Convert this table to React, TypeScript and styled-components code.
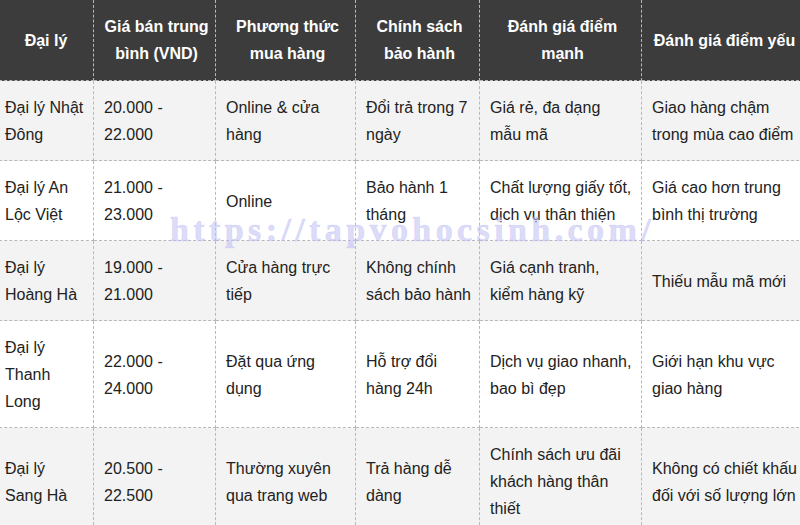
import React from 'react';
import styled, { createGlobalStyle } from 'styled-components';

const GlobalStyle = createGlobalStyle`
  html, body {
    margin: 0;
    padding: 0;
    background: #ffffff;
    overflow: hidden;
  }
`;

const Page = styled.div`
  position: relative;
  width: 800px;
  height: 525px;
  overflow: hidden;
  font-family: 'Liberation Sans', Arial, sans-serif;
`;

const Table = styled.table`
  border-collapse: collapse;
  table-layout: fixed;
  width: 809px;
  margin-left: -6px;
  font-size: 16px;
  line-height: 27px;
  color: #222;
`;

const HeadCell = styled.th`
  background: #3c3c3c;
  color: #ffffff;
  font-weight: bold;
  text-align: center;
  vertical-align: middle;
  white-space: pre-line;
  padding: 13px 2px 13px 6px;
  border: 1px dashed #b8b8b8;
  border-top: none;
`;

const Row = styled.tr<{ $shaded: boolean }>`
  background: ${p => (p.$shaded ? '#f3f3f3' : '#ffffff')};
`;

const Cell = styled.td`
  text-align: left;
  vertical-align: middle;
  white-space: pre-line;
  padding: 13px 0 12px 10px;
  border: 1px dashed #b8b8b8;
`;

const Watermark = styled.div`
  position: absolute;
  left: 170px;
  top: 210px;
  font-family: 'Liberation Serif', 'Times New Roman', serif;
  font-weight: bold;
  font-size: 34px;
  letter-spacing: 4.4px;
  line-height: 40px;
  color: rgba(190, 190, 245, 0.55);
  -webkit-text-stroke: 0.6px rgba(190, 190, 245, 0.55);
  white-space: nowrap;
  pointer-events: none;
`;

const widths = [99, 122, 140, 124, 162, 162];

const headers = [
  'Đại lý',
  'Giá bán trung\nbình (VND)',
  'Phương thức\nmua hàng',
  'Chính sách\nbảo hành',
  'Đánh giá điểm\nmạnh',
  'Đánh giá điểm yếu',
];

const rows: string[][] = [
  ['Đại lý Nhật\nĐông', '20.000 -\n22.000', 'Online & cửa\nhàng', 'Đổi trả trong 7\nngày', 'Giá rẻ, đa dạng\nmẫu mã', 'Giao hàng chậm\ntrong mùa cao điểm'],
  ['Đại lý An\nLộc Việt', '21.000 -\n23.000', 'Online', 'Bảo hành 1\ntháng', 'Chất lượng giấy tốt,\ndịch vụ thân thiện', 'Giá cao hơn trung\nbình thị trường'],
  ['Đại lý\nHoàng Hà', '19.000 -\n21.000', 'Cửa hàng trực\ntiếp', 'Không chính\nsách bảo hành', 'Giá cạnh tranh,\nkiểm hàng kỹ', 'Thiếu mẫu mã mới'],
  ['Đại lý\nThanh\nLong', '22.000 -\n24.000', 'Đặt qua ứng\ndụng', 'Hỗ trợ đổi\nhàng 24h', 'Dịch vụ giao nhanh,\nbao bì đẹp', 'Giới hạn khu vực\ngiao hàng'],
  ['Đại lý\nSang Hà', '20.500 -\n22.500', 'Thường xuyên\nqua trang web', 'Trả hàng dễ\ndàng', 'Chính sách ưu đãi\nkhách hàng thân\nthiết', 'Không có chiết khấu\nđối với số lượng lớn'],
];

export default function App() {
  return (
    <Page>
      <GlobalStyle />
      <Table>
        <colgroup>
          {widths.map((w, i) => (
            <col key={i} style={{ width: w }} />
          ))}
        </colgroup>
        <thead>
          <tr>
            {headers.map(h => (
              <HeadCell key={h}>{h}</HeadCell>
            ))}
          </tr>
        </thead>
        <tbody>
          {rows.map((r, i) => (
            <Row key={r[0]} $shaded={i % 2 === 0}>
              {r.map((c, j) => (
                <Cell key={j}>{c}</Cell>
              ))}
            </Row>
          ))}
        </tbody>
      </Table>
      <Watermark>https://tapvohocsinh.com/</Watermark>
    </Page>
  );
}
